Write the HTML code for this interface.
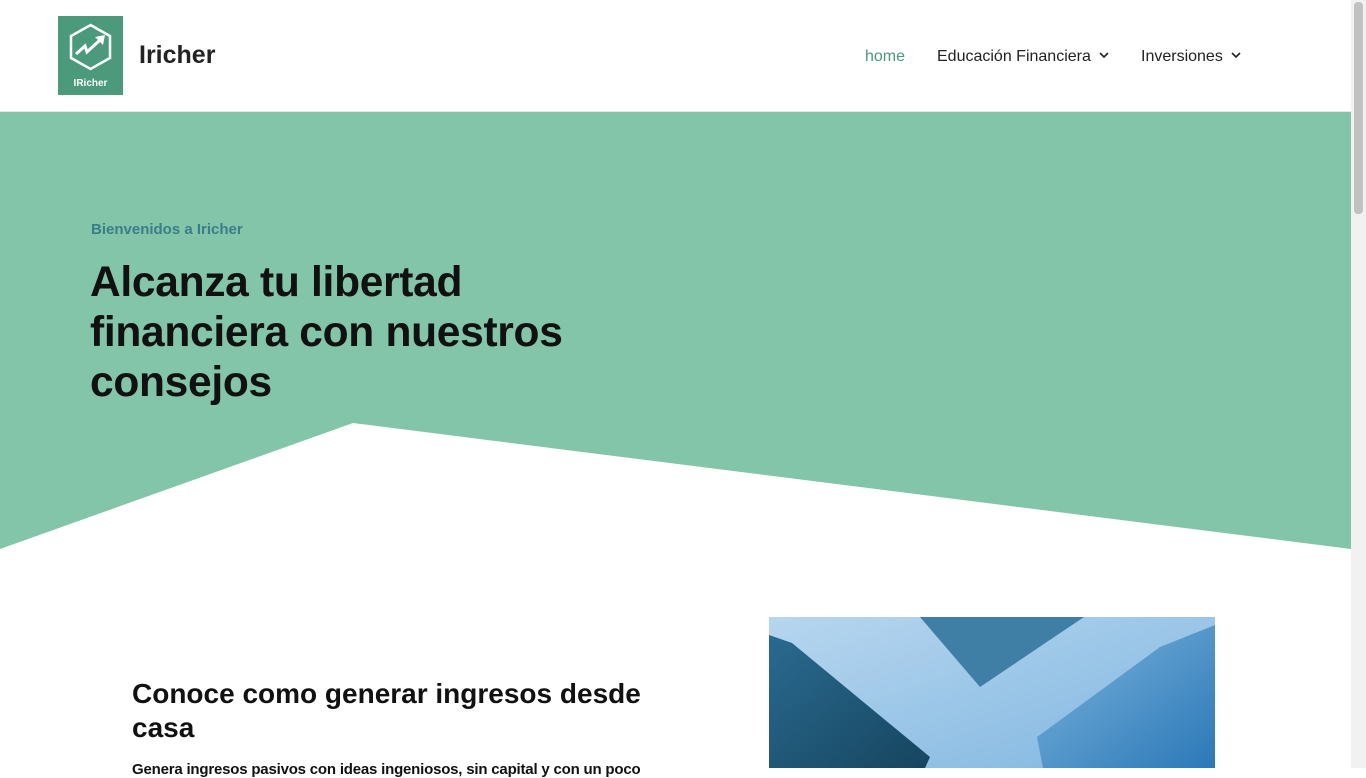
<!DOCTYPE html>
<html><head><meta charset="utf-8"><style>
*{margin:0;padding:0;box-sizing:border-box}
body{width:1366px;height:768px;overflow:hidden;font-family:"Liberation Sans",Roboto,sans-serif;background:#fff;position:relative}
.hdr{position:absolute;left:0;top:0;width:1351px;height:112px;background:#fff;border-bottom:1px solid #e6e6e6}
.logo{position:absolute;left:58px;top:16px;width:65px;height:79px;background:#4a9a7b}
.brand{position:absolute;left:139px;top:41px;font-size:25px;font-weight:bold;color:#222}
.nav{position:absolute;top:48px;font-size:16px;color:#222}
.nav svg{margin-left:8px;vertical-align:2px}
.hero{position:absolute;left:0;top:112px;width:1351px;height:437px}
.sub{position:absolute;left:91px;top:221px;font-size:15px;font-weight:bold;color:#3a7d8c}
h1{position:absolute;left:90px;top:258px;font-size:42.5px;line-height:50px;font-weight:bold;color:#111;width:560px;letter-spacing:-0.3px}
h2{position:absolute;left:132px;top:677px;font-size:28px;line-height:34px;font-weight:bold;color:#111;width:540px}
.p{position:absolute;left:132px;top:761px;font-size:15px;letter-spacing:-0.2px;font-weight:bold;color:#111;white-space:nowrap}
.sb{position:absolute;left:1351px;top:0;width:15px;height:768px;background:#f1f1f1}
.sb div{position:absolute;left:3px;top:2px;width:9px;height:212px;background:#c1c1c1;border-radius:4px}
</style></head><body>
<div class="hdr">
 <div class="logo"><svg width="65" height="79" viewBox="0 0 65 79">
  <polygon points="32.5,9 52,20 52,42 32.5,53 13,42 13,20" fill="none" stroke="#fff" stroke-width="2.5"/>
  <polyline points="18,38 27,30 29,36 42,24" fill="none" stroke="#fff" stroke-width="3"/>
  <polygon points="37,21 47,19 45,29" fill="#fff"/>
  <text x="32.5" y="70" font-size="10" font-weight="bold" fill="#fff" text-anchor="middle" font-family="Liberation Sans,sans-serif">IRicher</text>
 </svg></div>
 <div class="brand">Iricher</div>
 <div class="nav" style="left:865px;color:#4a9a7b">home</div>
 <div class="nav" style="left:937px">Educación Financiera<svg width="10" height="7" viewBox="0 0 10 7"><polyline points="1,1 5,5 9,1" fill="none" stroke="#222" stroke-width="1.6"/></svg></div>
 <div class="nav" style="left:1141px">Inversiones<svg width="10" height="7" viewBox="0 0 10 7"><polyline points="1,1 5,5 9,1" fill="none" stroke="#222" stroke-width="1.6"/></svg></div>
</div>
<svg class="hero" width="1351" height="437" viewBox="0 0 1351 437"><polygon points="0,0 1351,0 1351,437 353,311 0,437" fill="#83c5a8"/></svg>
<div class="sub">Bienvenidos a Iricher</div>
<h1>Alcanza tu libertad financiera con nuestros consejos</h1>
<h2>Conoce como generar ingresos desde casa</h2>
<div class="p">Genera ingresos pasivos con ideas ingeniosos, sin capital y con un poco</div>
<svg style="position:absolute;left:769px;top:617px" width="446" height="151" viewBox="0 0 446 151">
 <defs><linearGradient id="sky" x1="0" y1="0" x2="1" y2="1"><stop offset="0" stop-color="#b7d6ef"/><stop offset="1" stop-color="#7fb6e0"/></linearGradient>
 <linearGradient id="b1" x1="0" y1="0" x2="1" y2="1"><stop offset="0" stop-color="#2a6a90"/><stop offset="1" stop-color="#16455f"/></linearGradient>
 <linearGradient id="b3" x1="0" y1="0" x2="1" y2="1"><stop offset="0" stop-color="#7db5dc"/><stop offset="1" stop-color="#2b78b8"/></linearGradient></defs>
 <rect width="446" height="151" fill="url(#sky)"/>
 <polygon points="0,18 23,26 161,140 156,151 0,151" fill="url(#b1)"/>
 <polygon points="151,0 315,0 211,70" fill="#3f7fa6"/>
 <polygon points="268,120 391,30 446,8 446,151 274,151" fill="url(#b3)"/>
</svg>
<div class="sb"><div></div></div>
</body></html>
